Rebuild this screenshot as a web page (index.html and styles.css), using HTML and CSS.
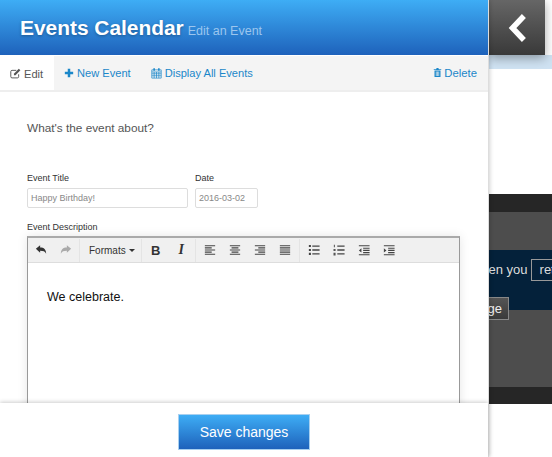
FILE: index.html
```html
<!DOCTYPE html>
<html lang="en">
<head>
<meta charset="utf-8">
<title>Events Calendar</title>
<link rel="stylesheet" href="styles.css">
</head>
<body>
<div class="page">
  <section class="panel">
    <header class="head">
      <h1 class="head-title">Events Calendar</h1>
      <span class="head-sub">Edit an Event</span>
    </header>
    <nav class="tabs">
      <a class="tab tab-active">
        <svg class="ico" viewBox="0 0 14 14"><path d="M11 8v3a1.600 1.600 0 0 1-1.600 1.600H2.600A1.600 1.600 0 0 1 1 11V4.600A1.600 1.600 0 0 1 2.600 3H8" fill="none" stroke="currentColor" stroke-width="1.200"/><path d="M5 7.200 11.200 1l2 2L7 9.200H5z" fill="currentColor"/></svg>
        Edit
      </a>
      <a class="tab">
        <svg class="ico" viewBox="0 0 12 12"><path d="M4.500 1h3v3.500H11v3H7.500V11h-3V7.500H1v-3h3.500z" fill="currentColor"/></svg>
        New Event
      </a>
      <a class="tab">
        <svg class="ico ico-cal" viewBox="0 0 14 14"><path d="M1 3h12v10.500H1z M1 5.700h12 M1 8h12 M1 10.500h12 M4 5.700v7.800 M7 5.700v7.800 M10 5.700v7.800" fill="none" stroke="currentColor" stroke-width=".9"/><path d="M3 1h2v3H3zM9 1h2v3H9z" fill="currentColor"/></svg>
        Display All Events
      </a>
      <a class="tab tab-end">
        <svg class="ico ico-trash" viewBox="0 0 12 14"><path d="M1 2.500h10v1.300H1zM4.200 2.500 4.800 1h2.400l.6 1.500" fill="currentColor"/><path fill-rule="evenodd" d="M2 4.200h8V13H2zM3.800 5.500v6h.9v-6zM5.600 5.500v6h.9v-6zM7.300 5.500v6h.9v-6z" fill="currentColor"/></svg>
        Delete
      </a>
    </nav>
    <main class="body">
      <p class="lead">What's the event about?</p>
      <div class="fields">
        <div class="field">
          <label class="label">Event Title</label>
          <div class="input input-title">Happy Birthday!</div>
        </div>
        <div class="field">
          <label class="label">Date</label>
          <div class="input input-date">2016-03-02</div>
        </div>
      </div>
      <label class="label label-desc">Event Description</label>
      <div class="editor">
        <div class="toolbar">
          <div class="group group-hist">
            <svg class="tool" viewBox="0 0 14 14"><path d="M1 5.500 6 1.500v2.600c4.500 0 7 2.200 7 7.400-1.300-3-3.300-3.700-7-3.700v2.300z" fill="#333"/></svg>
            <svg class="tool" viewBox="0 0 14 14"><path d="M13 5.500 8 1.500v2.600c-4.500 0-7 2.200-7 7.400 1.300-3 3.300-3.700 7-3.700v2.300z" fill="#aaa"/></svg>
          </div>
          <div class="group group-fmt"><span class="formats">Formats</span><i class="caret"></i></div>
          <div class="group group-text">
            <span class="tool-b">B</span>
            <span class="tool-i">I</span>
          </div>
          <div class="group group-align">
            <svg class="tool" viewBox="0 0 14 14"><path d="M1 2h12M1 4.500h8M1 7h12M1 9.500h8M1 12h12" stroke="#444" stroke-width="1.300"/></svg>
            <svg class="tool" viewBox="0 0 14 14"><path d="M1 2h12M3 4.500h8M1 7h12M3 9.500h8M1 12h12" stroke="#444" stroke-width="1.300"/></svg>
            <svg class="tool" viewBox="0 0 14 14"><path d="M1 2h12M5 4.500h8M1 7h12M5 9.500h8M1 12h12" stroke="#444" stroke-width="1.300"/></svg>
            <svg class="tool" viewBox="0 0 14 14"><path d="M1 2h12M1 4.500h12M1 7h12M1 9.500h12M1 12h12" stroke="#444" stroke-width="1.300"/></svg>
          </div>
          <div class="group group-list">
            <svg class="tool" viewBox="0 0 14 14"><path d="M5 2.500h8.500M5 7h8.500M5 11.500h8.500" stroke="#444" stroke-width="1.500"/><path d="M1 1.200h2.400v2.400H1zM1 5.800h2.400v2.400H1zM1 10.300h2.400v2.400H1z" fill="#444"/></svg>
            <svg class="tool" viewBox="0 0 14 14"><path d="M5 2.500h8.500M5 7h8.500M5 11.500h8.500" stroke="#444" stroke-width="1.500"/><path d="M1 .8h1.200v3H1zM.6 5.800h2.400v2.400H.6zM.6 10.300h2.400v3H.6z" fill="#555"/></svg>
            <svg class="tool" viewBox="0 0 14 14"><path d="M1 2h12.500M6 5h7.500M6 7.500h7.500M6 10h7.500M1 12.500h12.500" stroke="#444" stroke-width="1.300"/><path d="M4 5v5L1 7.500z" fill="#444"/></svg>
            <svg class="tool" viewBox="0 0 14 14"><path d="M1 2h12.500M6 5h7.500M6 7.500h7.500M6 10h7.500M1 12.500h12.500" stroke="#444" stroke-width="1.300"/><path d="M1 5v5l3-2.500z" fill="#444"/></svg>
          </div>
        </div>
        <div class="content">We celebrate.</div>
      </div>
    </main>
    <footer class="foot">
      <button class="save">Save changes</button>
    </footer>
  </section>
  <aside class="side">
    <div class="side-blank"></div>
    <div class="band-top"></div>
    <div class="band-mid"></div>
    <div class="band-navy">
      <span class="clip-text">When you</span>
      <span class="clip-box">return</span>
    </div>
    <div class="band-low"></div>
    <div class="band-top band-bottom"></div>
    <a class="change">Change</a>
    <a class="toggle">
      <svg class="toggle-ico" viewBox="0 0 20 28"><path d="M15 4 5.500 14l9.500 10" fill="none" stroke="#fff" stroke-width="5.500" stroke-linecap="square" stroke-linejoin="miter"/></svg>
    </a>
  </aside>
</div>
</body>
</html>
```

FILE: styles.css
```css
* { box-sizing: border-box; }
html, body { margin: 0; height: 100%; overflow: hidden; background: #fff; }
body { font-family: "Liberation Sans", Arial, sans-serif; color: #333; }
.page { display: flex; width: 552px; height: 457px; overflow: hidden; }

.panel {
  position: relative;
  z-index: 2;
  display: flex;
  flex-direction: column;
  flex: 0 0 489px;
  height: 457px;
  background: #fff;
  border-right: 1px solid #ddd;
  box-shadow: 1px 0 4px rgba(0,0,0,.18);
}

.head {
  display: flex;
  align-items: baseline;
  flex: 0 0 55px;
  padding: 13px 0 0 20px;
  background: linear-gradient(#3eadf5, #1e62bb);
}
.head-title {
  margin: 0;
  font-size: 20.900px;
  line-height: 30px;
  font-weight: 700;
  color: #fff;
  text-shadow: 0 1px 3px rgba(0,0,0,.3);
}
.head-sub { margin-left: 4px; font-size: 12.500px; color: #9cc6ee; }

.tabs {
  display: flex;
  flex: 0 0 34px;
  margin-top: 1px;
  background: #f4f4f4;
  border-bottom: 2px solid #eee;
  font-size: 11.100px;
}
.tab {
  display: flex;
  align-items: center;
  gap: 3px;
  padding: 1px 10px 0;
  height: 32px;
  color: #1b87c9;
}
.tab-active {
  height: 34px;
  width: 54px;
  color: #555;
  background: #fff;
}
.tab-end { margin-left: auto; gap: 2px; padding-right: 11px; font-size: 11.300px; }
.ico { width: 10px; height: 10px; flex: none; }
.tab-active .ico { width: 11px; height: 11px; }
.ico-cal { width: 11px; height: 12px; }
.ico-trash { width: 9px; height: 11px; }

.body { flex: 1; min-height: 0; overflow: hidden; padding: 0 27px; }
.lead { margin: 28px 0 0; font-size: 11.800px; line-height: 16px; color: #555; }
.fields { display: flex; gap: 7px; margin-top: 36px; }
.label { display: block; font-size: 9px; line-height: 12px; color: #333; }
.input {
  height: 20px;
  margin-top: 4px;
  padding: 0 3px;
  border: 1px solid #ddd;
  border-radius: 2px;
  font-size: 9px;
  line-height: 18px;
  color: #888;
  background: #fff;
}
.input-title { width: 161px; }
.input-date { width: 63px; }
.label-desc { margin-top: 13px; }

.editor {
  margin-top: 3px;
  width: 433px;
  height: 260px;
  border: 1px solid #999;
  border-top: 2px solid #aaa;
  box-shadow: 0 0 10px rgba(0,0,0,.1);
}
.toolbar {
  display: flex;
  align-items: center;
  height: 25px;
  background: #f0f0f0;
  border-bottom: 1px solid #ddd;
}
.group {
  display: flex;
  align-items: center;
  height: 23px;
  border-right: 1px solid #e4e4e4;
  padding: 0 7px;
  gap: 13px;
}
.tool { width: 12px; height: 12px; flex: none; }
.group-hist { width: 52px; padding: 0 6px 0 7px; }
.group-fmt { width: 62px; gap: 3px; padding-left: 9px; }
.formats { font-size: 10px; color: #333; }
.caret {
  width: 0;
  height: 0;
  border-left: 3px solid transparent;
  border-right: 3px solid transparent;
  border-top: 3px solid #333;
}
.group-text { width: 54px; gap: 18px; padding-left: 9px; }
.tool-b { font-size: 13px; font-weight: 700; color: #333; }
.tool-i { font-family: "Liberation Serif", serif; font-size: 14px; font-weight: 700; font-style: italic; color: #333; }
.group-align { width: 104px; padding-left: 8px; }
.group-list { border-right: 0; padding-left: 8px; }
.content { padding: 25px 19px; font-size: 12.500px; line-height: 18px; color: #111; }

.foot {
  position: relative;
  display: flex;
  justify-content: center;
  align-items: flex-start;
  flex: 0 0 54px;
  padding-top: 11px;
  background: #fff;
  box-shadow: 0 -1px 4px rgba(0,0,0,.2);
}
.save {
  width: 132px;
  height: 36px;
  border: 1px solid #a8d0f0;
  background: linear-gradient(#3eadf5, #1e62bb);
  color: #fff;
  font: 14px "Liberation Sans", Arial, sans-serif;
}

.side {
  position: relative;
  flex: 1;
  display: flex;
  flex-direction: column;
  min-width: 0;
  overflow: hidden;
  font-size: 13px;
}
.side-blank {
  flex: 0 0 194px;
  background: linear-gradient(#cfe2f2, #cfe2f2) 0 55px / 100% 14px no-repeat;
}
.band-top { flex: 0 0 18px; background: #262626; }
.band-mid { flex: 0 0 38px; background: #4d4d4d; }
.band-low { flex: 0 0 77px; background: #4d4d4d; }
.band-bottom { flex-basis: 17px; }
.band-navy {
  display: flex;
  align-items: flex-start;
  flex: 0 0 60px;
  margin-left: -20px;
  padding-top: 9px;
  gap: 3px;
  background: #04213a;
  color: #ddd;
  white-space: nowrap;
}
.clip-text { line-height: 22px; }
.clip-box { border: 1px solid #999; padding: 0 8px; line-height: 20px; }
.change {
  position: absolute;
  left: -40px;
  top: 297px;
  height: 23px;
  width: 60px;
  padding-right: 6px;
  line-height: 21px;
  border: 1px solid #888;
  background: linear-gradient(#555, #3a3a3a);
  color: #eee;
  text-align: right;
}
.toggle {
  position: absolute;
  left: 0;
  top: 0;
  display: flex;
  align-items: center;
  justify-content: center;
  width: 56px;
  height: 55px;
  background: linear-gradient(#666, #393939);
  box-shadow: 0 3px 10px rgba(0,0,0,.35);
}
.toggle-ico { width: 20px; height: 28px; }
```
